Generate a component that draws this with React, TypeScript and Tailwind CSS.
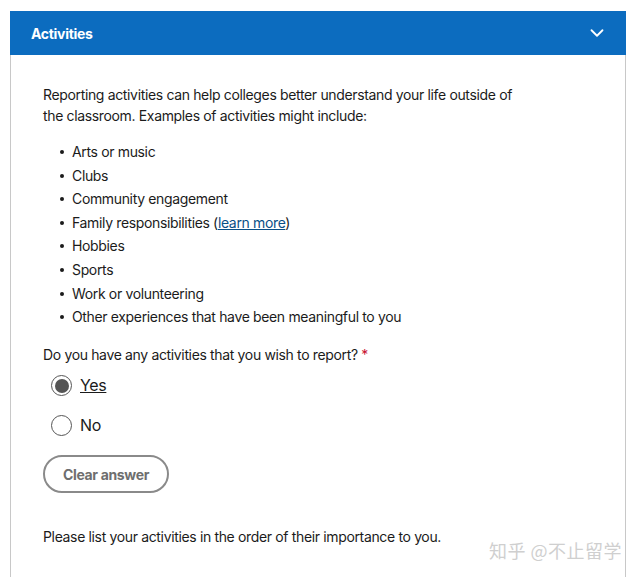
import { ChevronDown } from "lucide-react";

const items = [
  "Arts or music",
  "Clubs",
  "Community engagement",
  "FAMILY",
  "Hobbies",
  "Sports",
  "Work or volunteering",
  "Other experiences that have been meaningful to you",
];

export default function App() {
  return (
    <div className="relative min-h-[577px] bg-white pt-[11px] pl-[10px] pr-[13px] font-['Inter',sans-serif] tracking-[-0.35px] text-[#1b1b1b]">
      <section className="min-h-[566px] border-x border-[#c8c8c8]">
        <header className="-mx-px flex h-[44px] items-center justify-between bg-[#0c6cbf] pl-[21px] pr-[18px] text-white">
          <h2 className="text-[14px] font-bold tracking-[-0.3px]">Activities</h2>
          <ChevronDown className="h-[22px] w-[22px]" strokeWidth={2} />
        </header>

        <div className="px-[32px] pt-[29px] text-[14px] leading-[21px]">
          <p className="max-w-[480px]">
            Reporting activities can help colleges better understand your life outside of the classroom. Examples of
            activities might include:
          </p>

          <ul className="mt-[15px] space-y-[2.6px] pl-[29px]">
            {items.map((t) => (
              <li key={t} className="relative">
                <span className="absolute -left-[12px] top-[9px] h-[4px] w-[4px] rounded-full bg-[#1b1b1b]" />
                {t === "FAMILY" ? (
                  <>
                    Family responsibilities (
                    <a href="#" className="text-[#0a4f86] underline">
                      learn more
                    </a>
                    )
                  </>
                ) : (
                  t
                )}
              </li>
            ))}
          </ul>

          <p className="mt-[17px]">
            Do you have any activities that you wish to report? <span className="text-[#c8102e]">*</span>
          </p>

          <div className="mt-[10px] flex flex-col gap-[19px] pl-[8px] text-[16px]">
            <label className="flex items-center gap-[8px]">
              <span className="flex h-[21px] w-[21px] items-center justify-center rounded-full border border-[#555]">
                <span className="h-[14px] w-[14px] rounded-full bg-[#555]" />
              </span>
              <span className="underline">Yes</span>
            </label>
            <label className="flex items-center gap-[8px]">
              <span className="h-[21px] w-[21px] rounded-full border border-[#555]" />
              <span>No</span>
            </label>
          </div>

          <button className="mt-[19px] h-[38px] rounded-full border-2 border-[#8a8a8a] px-[18px] text-[14px] font-bold text-[#6e6e6e]">
            Clear answer
          </button>

          <p className="mt-[33px]">Please list your activities in the order of their importance to you.</p>
        </div>
      </section>

      <div className="absolute right-[17px] top-[537px] font-['Noto_Sans_CJK_SC',sans-serif] text-[18px] tracking-[0.5px] text-[#cfcfcf]">
        知乎 @不止留学
      </div>
    </div>
  );
}
